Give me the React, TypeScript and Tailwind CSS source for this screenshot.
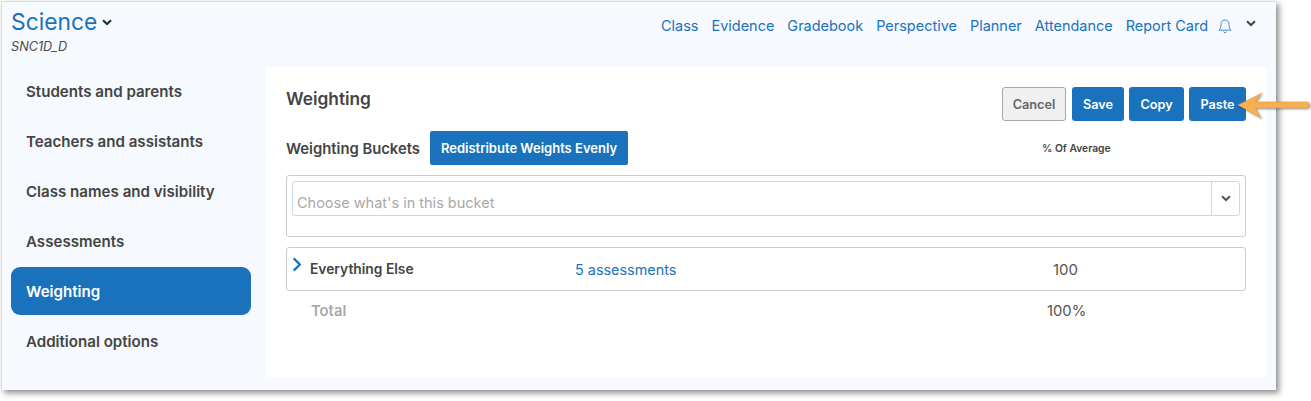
const navLinks = ['Class', 'Evidence', 'Gradebook', 'Perspective', 'Planner', 'Attendance', 'Report Card'];
const sideItems = ['Students and parents', 'Teachers and assistants', 'Class names and visibility', 'Assessments', 'Weighting', 'Additional options'];

function SmallChevron({ className }: { className: string }) {
  return (
    <svg viewBox="0 0 10 7" className={className} fill="none" stroke="currentColor" strokeWidth="2">
      <path d="M1 1.2 L5 5 L9 1.2" />
    </svg>
  );
}

export default function App() {
  return (
    <div className="relative w-[1311px] h-[401px] bg-white overflow-hidden font-['Inter',sans-serif]">
      <div className="ml-px mt-px w-[1275px] h-[389px] bg-[#f6f9fd] shadow-[3px_3px_6px_rgba(0,0,0,0.45)] border-t border-l border-[#dddddd] flex flex-col">
        {/* Top bar */}
        <header className="h-[65px] flex justify-between pl-[9px] pr-[20px] shrink-0">
          <div className="pt-[5px]">
            <div className="flex items-center gap-[5px]">
              <span className="text-[22.8px] leading-[30px] text-[#1b72bc]">Science</span>
              <SmallChevron className="w-[10px] h-[7px] text-[#1c2b3a]" />
            </div>
            <div className="text-[12.7px] leading-[14px] mt-[3px] italic text-[#4a4a4a]">SNC1D_D</div>
          </div>
          <nav className="flex items-start gap-[13px] pt-[14px] text-[14.47px] leading-[20px] text-[#1b72bc]">
            {navLinks.map((link) => (
              <span key={link}>{link}</span>
            ))}
            <svg viewBox="0 0 16 16" className="w-[16px] h-[17px] -ml-[4px] mt-[2px]" fill="none" stroke="#1b72bc" strokeWidth="0.8">
              <path d="M8 1.5c-2.6 0-4 2-4 4.3 0 3.2-.8 4.6-2 5.9h12c-1.2-1.3-2-2.7-2-5.9 0-2.3-1.4-4.3-4-4.3z" />
              <path d="M6.5 13.4c.4 1 2.6 1 3 0" />
            </svg>
            <SmallChevron className="w-[10px] h-[7px] text-[#444] mt-[4px]" />
          </nav>
        </header>

        <div className="flex flex-1 min-h-0">
          {/* Sidebar */}
          <aside className="w-[264px] pl-[9px] shrink-0 flex flex-col">
            {sideItems.map((item) => (
              <div
                key={item}
                className={
                  item === 'Weighting'
                    ? 'w-[240px] h-[48px] mb-[2px] pl-[15px] pt-[2px] flex items-center rounded-[9px] bg-[#1b72bc] text-white text-[15.1px] font-semibold'
                    : 'w-[240px] h-[48px] mb-[2px] pl-[15px] pt-[2px] flex items-center text-[#444444] text-[15.1px] font-semibold'
                }
              >
                {item}
              </div>
            ))}
          </aside>

          {/* Main panel */}
          <main className="w-[1000px] h-[310px] bg-white pl-[20px] pr-[20px]">
            <div className="flex justify-between h-[64px]">
              <h1 className="pt-[22px] text-[17.3px] leading-[20px] font-semibold text-[#444444]">Weighting</h1>
              <div className="flex gap-[5px] pt-[20px] text-[12.7px] font-semibold">
                <button className="w-[64px] h-[34px] mr-[1px] pt-[1px] rounded-[3px] border border-[#a8a8a8] bg-[#f0f0f0] text-[#666666]">Cancel</button>
                <button className="w-[52px] h-[34px] pt-[1px] rounded-[3px] bg-[#1b72bc] text-white">Save</button>
                <button className="w-[55px] h-[34px] pt-[1px] rounded-[3px] bg-[#1b72bc] text-white">Copy</button>
                <button className="w-[57px] h-[34px] pt-[1px] rounded-[3px] bg-[#1b72bc] text-white">Paste</button>
              </div>
            </div>

            <div className="flex items-center h-[34px]">
              <span className="w-[144px] pt-[2px] text-[14.8px] font-semibold text-[#444444]">Weighting Buckets</span>
              <button className="w-[198px] h-[34px] pt-[2px] rounded-[2px] bg-[#1b72bc] text-white text-[13px] font-semibold">Redistribute Weights Evenly</button>
              <span className="ml-[414px] pt-[1px] text-[10.3px] font-semibold text-[#444444]">% Of Average</span>
            </div>

            <div className="mt-[10px] h-[62px] border border-[#cccccc] rounded-[3px] pt-[5px] px-[5px]">
              <div className="flex h-[35px] border border-[#c5d9ea] rounded-[3px]">
                <div className="flex-1 pl-[4px] pt-[9px] flex items-center text-[14.5px] text-[#a9a9a9]">Choose what's in this bucket</div>
                <div className="w-[28px] border-l border-[#c5d9ea] flex items-center justify-center">
                  <SmallChevron className="w-[10px] h-[7px] text-[#555555]" />
                </div>
              </div>
            </div>

            <div className="mt-[10px] h-[44px] border border-[#cccccc] rounded-[3px] flex items-center">
              <svg viewBox="0 0 10 16" className="w-[10px] h-[15px] ml-[5px] -mt-[9px] text-[#1b72bc]" fill="none" stroke="currentColor" strokeWidth="2.4">
                <path d="M1.5 1.5 L8 8 L1.5 14.5" />
              </svg>
              <span className="ml-[8px] w-[265px] text-[13.8px] font-semibold text-[#444444]">Everything Else</span>
              <span className="w-[478px] pt-[2px] text-[14.4px] text-[#1b72bc]">5 assessments</span>
              <span className="pt-[2px] text-[15px] text-[#555555]">100</span>
            </div>

            <div className="flex items-center h-[40px] text-[14.8px]">
              <span className="ml-[25px] w-[736px] font-semibold text-[#a9a9a9]">Total</span>
              <span className="text-[#555555]">100%</span>
            </div>
          </main>
        </div>
      </div>

      {/* Callout arrow pointing at Paste */}
      <svg viewBox="0 0 80 34" className="absolute left-[1236px] top-[87px] w-[80px] h-[34px]">
        <path
          d="M2 18 L26 6 L19 15 L72 15 Q75 18 72 21 L19 21 L25 31 Z"
          fill="#f8ae52"
          stroke="#e8993a"
          strokeWidth="0.5"
          style={{ filter: 'drop-shadow(1px 1px 1px rgba(0,0,0,0.4))' }}
        />
      </svg>
    </div>
  );
}
